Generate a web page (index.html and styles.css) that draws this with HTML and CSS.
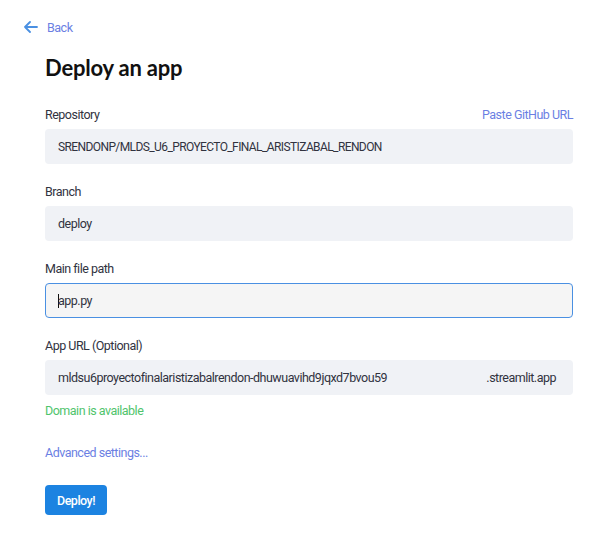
FILE: index.html
```html
<!DOCTYPE html>
<html>
<head>
<meta charset="utf-8">
<link rel="stylesheet" href="styles.css">
</head>
<body>
<div class="page">
  <a class="back" href="#">
    <svg class="back-icon" width="14" height="12" viewBox="0 0 14 12"><path d="M6 1 L1 6 L6 11 M1 6 H13" fill="none" stroke="#4a90e2" stroke-width="1.8" stroke-linecap="round" stroke-linejoin="round"/></svg>
    <span>Back</span>
  </a>
  <main class="form">
    <h1 class="title">Deploy an app</h1>
    <div class="field">
      <div class="label-row"><span class="label">Repository</span><a class="link" href="#">Paste GitHub URL</a></div>
      <div class="input caps">SRENDONP/MLDS_U6_PROYECTO_FINAL_ARISTIZABAL_RENDON</div>
    </div>
    <div class="field">
      <div class="label-row"><span class="label">Branch</span></div>
      <div class="input">deploy</div>
    </div>
    <div class="field">
      <div class="label-row"><span class="label">Main file path</span></div>
      <div class="input focused"><span class="caret"></span>app.py</div>
    </div>
    <div class="field">
      <div class="label-row"><span class="label">App URL (Optional)</span></div>
      <div class="input url"><span>mldsu6proyectofinalaristizabalrendon-dhuwuavihd9jqxd7bvou59</span><span class="suffix">.streamlit.app</span></div>
      <div class="ok">Domain is available</div>
    </div>
    <a class="link advanced" href="#">Advanced settings...</a>
    <button class="deploy">Deploy!</button>
  </main>
</div>
</body>
</html>
```
FILE: styles.css
```css
* { box-sizing: border-box; }
html, body { margin: 0; background: #fff; }
body { font-family: "Roboto", "Liberation Sans", sans-serif; font-size: 12.5px; letter-spacing: -0.5px; color: #31333f; }
.page { padding: 19px 0 0 0; }
.back { display: flex; align-items: center; gap: 9px; margin-left: 24px; height: 16px; text-decoration: none; color: #6b7fe3; }
.back-icon { display: block; }
.form { width: 528px; margin-left: 45px; }
.title { font-family: "Lato", "Roboto", sans-serif; font-size: 22px; font-weight: 700; letter-spacing: -0.2px; color: #111; margin: 19px 0 24px 0; line-height: 28px; }
.field { margin-bottom: 19px; }
.label-row { display: flex; justify-content: space-between; align-items: center; height: 16px; margin-bottom: 7px; }
.link { color: #6b7fe3; text-decoration: none; }
.input { height: 35px; background: #f0f2f6; border-radius: 4px; padding: 0 12px; display: flex; align-items: center; border: 1px solid transparent; }
.input.caps { font-size: 12px; letter-spacing: -0.6px; }
.input.focused { background: #f5f5f5; border-color: #4a90e2; }
.caret { width: 1px; height: 14px; background: #111; margin-right: -1px; }
.input.url .suffix { margin-left: auto; margin-right: 4px; }
.ok { margin-top: 8px; height: 16px; line-height: 16px; color: #4fc46c; }
.advanced { display: block; margin-top: 26px; height: 16px; line-height: 16px; }
.deploy { margin-top: 24px; background: #1c83e1; color: #fff; border: none; border-radius: 4px; height: 30px; padding: 0 12px; font: inherit; letter-spacing: inherit; font-weight: 500; display: block; }
```
